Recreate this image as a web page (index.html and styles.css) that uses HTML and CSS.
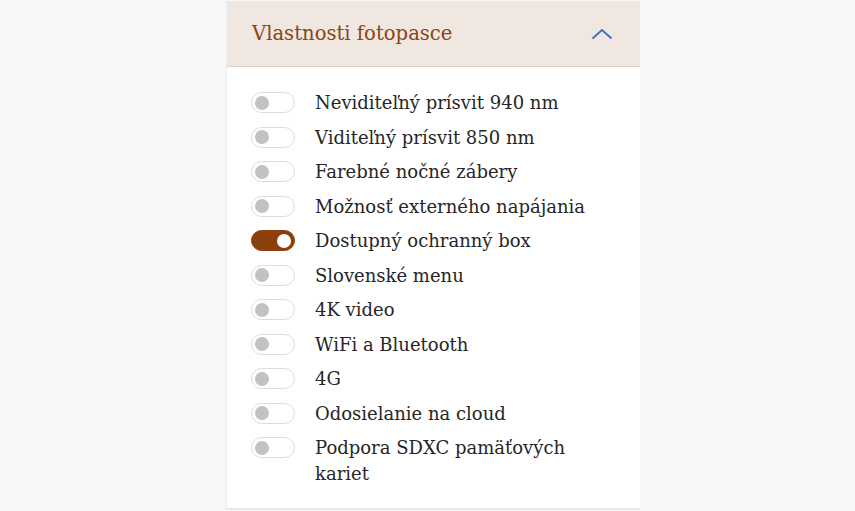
FILE: index.html
```html
<!DOCTYPE html>
<html lang="sk">
<head>
<meta charset="utf-8">
<title>Vlastnosti fotopasce</title>
<link rel="stylesheet" href="styles.css">
</head>
<body>
<div class="page">
  <section class="card">
    <header class="card-head">
      <h2 class="card-title">Vlastnosti fotopasce</h2>
      <svg class="chevron" width="22" height="12" viewBox="0 0 22 12" aria-hidden="true"><path d="M1.5 10.5 L11 2 L20.5 10.5" fill="none" stroke="#3d6fc6" stroke-width="2"/></svg>
    </header>
    <ul class="options">
      <li class="option"><span class="toggle"><span class="knob"></span></span><span class="label">Neviditeľný prísvit 940 nm</span></li>
      <li class="option"><span class="toggle"><span class="knob"></span></span><span class="label">Viditeľný prísvit 850 nm</span></li>
      <li class="option"><span class="toggle"><span class="knob"></span></span><span class="label">Farebné nočné zábery</span></li>
      <li class="option"><span class="toggle"><span class="knob"></span></span><span class="label">Možnosť externého napájania</span></li>
      <li class="option"><span class="toggle on"><span class="knob"></span></span><span class="label">Dostupný ochranný box</span></li>
      <li class="option"><span class="toggle"><span class="knob"></span></span><span class="label">Slovenské menu</span></li>
      <li class="option"><span class="toggle"><span class="knob"></span></span><span class="label">4K video</span></li>
      <li class="option"><span class="toggle"><span class="knob"></span></span><span class="label">WiFi a Bluetooth</span></li>
      <li class="option"><span class="toggle"><span class="knob"></span></span><span class="label">4G</span></li>
      <li class="option"><span class="toggle"><span class="knob"></span></span><span class="label">Odosielanie na cloud</span></li>
      <li class="option"><span class="toggle"><span class="knob"></span></span><span class="label">Podpora SDXC pamäťových kariet</span></li>
    </ul>
  </section>
</div>
</body>
</html>
```
FILE: styles.css
```css
html, body {
  margin: 0;
  padding: 0;
  background: #f6f7f9;
}
body {
  font-family: "DejaVu Serif", "Liberation Serif", serif;
  color: #262626;
}
.page {
  padding: 1px 0 0 226px;
}
.card {
  width: 413px;
  background: #fff;
  border-left: 1px solid #eceef0;
  border-bottom: 2px solid #e6e7e9;
}
.card-head {
  height: 65px;
  background: #f0e7e1;
  border-bottom: 1px solid #dbd2cc;
  display: flex;
  align-items: center;
  justify-content: space-between;
  padding: 0 27px 0 25px;
}
.card-title {
  margin: 0;
  font-weight: normal;
  font-size: 19.6px;
  color: #8a4516;
}
.chevron {
  display: block;
}
.options {
  list-style: none;
  margin: 0;
  padding: 23px 20px 22px 24px;
  display: flex;
  flex-direction: column;
  gap: 9px;
}
.option {
  display: flex;
  align-items: flex-start;
  gap: 20px;
  font-size: 18px;
  line-height: 25.5px;
}
.label {
  max-width: 285px;
}
.toggle {
  flex: none;
  box-sizing: border-box;
  width: 44px;
  height: 21px;
  margin-top: 2px;
  border: 1px solid #dcdcdc;
  border-radius: 11px;
  background: #fff;
  display: flex;
  align-items: center;
  padding: 0 3px;
}
.knob {
  width: 14px;
  height: 14px;
  border-radius: 50%;
  background: #c2c2c2;
}
.toggle.on {
  background: #8b3f0d;
  border-color: #8b3f0d;
  justify-content: flex-end;
}
.toggle.on .knob {
  background: #fff;
}
```
